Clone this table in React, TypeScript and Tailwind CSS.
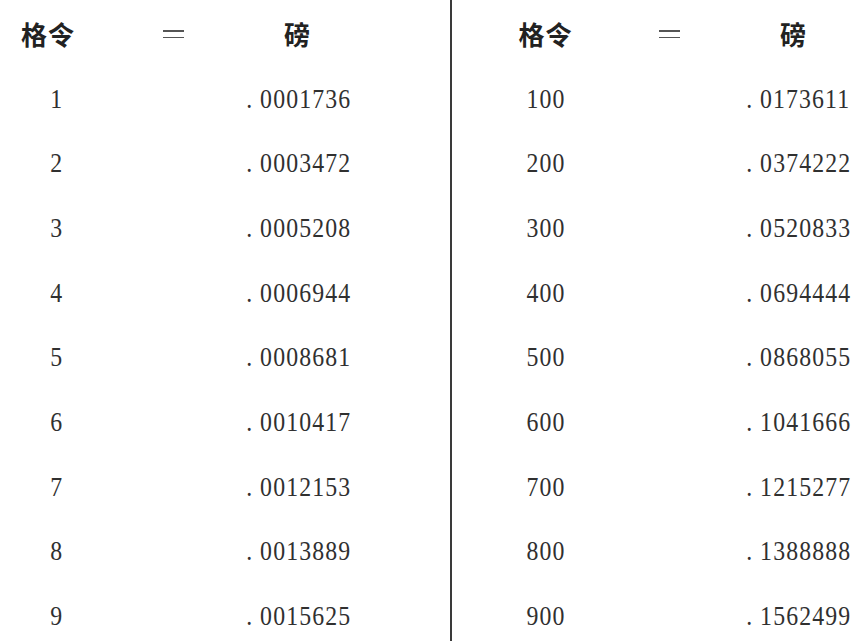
import React from "react";

const left: [string, string][] = [
  ["1", "0001736"],
  ["2", "0003472"],
  ["3", "0005208"],
  ["4", "0006944"],
  ["5", "0008681"],
  ["6", "0010417"],
  ["7", "0012153"],
  ["8", "0013889"],
  ["9", "0015625"],
];

const right: [string, string][] = [
  ["100", "0173611"],
  ["200", "0374222"],
  ["300", "0520833"],
  ["400", "0694444"],
  ["500", "0868055"],
  ["600", "1041666"],
  ["700", "1215277"],
  ["800", "1388888"],
  ["900", "1562499"],
];

const cjk = "font-['Noto_Sans_CJK_SC',sans-serif] text-[26px] leading-none text-[#222]";
const num =
  "inline-block scale-x-85 font-['Liberation_Serif',serif] text-[28px] leading-none tracking-[1.3px] text-[#303030]";

function Value({ v }: { v: string }) {
  return (
    <span className={num}>
      <span className="mr-[8px]">.</span>
      {v}
    </span>
  );
}

function Eq() {
  return (
    <span className="flex flex-col gap-[5px] items-center">
      <span className="block w-[21px] h-[1.5px] bg-[#555]" />
      <span className="block w-[21px] h-[1.5px] bg-[#555]" />
    </span>
  );
}

export default function App() {
  return (
    <div className="w-[856px] h-[641px] bg-white flex overflow-hidden">
      <div className="w-[452px] shrink-0 border-r-2 border-[#3a3a3a] pt-[2px]">
        <div className="grid grid-cols-[114px_118px_130px] auto-rows-[64.7px] items-center">
          <div className={`${cjk} font-bold text-center pr-[18px] tracking-[1px]`}>格令</div>
          <div className="flex justify-center"><Eq /></div>
          <div className={`${cjk} font-semibold text-center`}>磅</div>
          {left.map(([a, b]) => (
            <React.Fragment key={a}>
              <div className="text-center"><span className={num}>{a}</span></div>
              <div />
              <div className="text-center pl-[4px]"><Value v={b} /></div>
            </React.Fragment>
          ))}
        </div>
      </div>
      <div className="flex-1 pt-[2px]">
        <div className="grid grid-cols-[187px_61px_154px] auto-rows-[64.7px] items-center">
          <div className={`${cjk} font-bold text-center tracking-[1px]`}>格令</div>
          <div className="flex justify-center"><Eq /></div>
          <div className={`${cjk} font-semibold text-center pl-[32px]`}>磅</div>
          {right.map(([a, b]) => (
            <React.Fragment key={a}>
              <div className="text-center"><span className={num}>{a}</span></div>
              <div />
              <div className="text-center pl-[37px]"><Value v={b} /></div>
            </React.Fragment>
          ))}
        </div>
      </div>
    </div>
  );
}
